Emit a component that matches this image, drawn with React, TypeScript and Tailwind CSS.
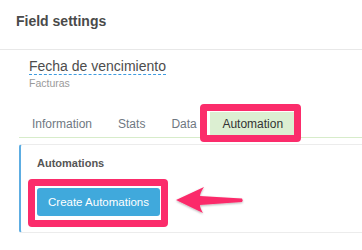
export default function App() {
  const tabs = ["Information", "Stats", "Data"];
  return (
    <div className="relative w-[362px] h-[250px] overflow-hidden bg-white font-['Liberation_Sans',Arial,sans-serif]">
      {/* header */}
      <div className="h-[50px] border-b border-[#e8e8e8] pl-4 pt-[13px]">
        <h1 className="text-[14px] leading-4 font-bold text-[#4a4a4a]">Field settings</h1>
      </div>

      <div className="pt-[9px]">
        <div className="pl-[29px]">
          <div className="w-fit text-[14px] leading-[15px] text-[#4d4d4d] border-b border-dashed border-[#3d9be0]">
            Fecha de vencimiento
          </div>
          <p className="mt-[2px] text-[10.5px] leading-3 text-[#9a9a9a]">Facturas</p>
        </div>

        {/* tabs */}
        <div className="ml-[19px] mt-[23px] flex border-b border-[#d7ecca]">
          {tabs.map((t) => (
            <div key={t} className="px-[13px] text-[12px] leading-[25px] text-[#6f7882]">
              {t}
            </div>
          ))}
          <div className="w-[86px] text-center text-[12px] leading-[25px] text-[#333] bg-[#dcefd2]">Automation</div>
        </div>

        {/* panel */}
        <div className="ml-[19px] mt-[6px] rounded-l-[3px] border-y border-[#ececec] border-l-2 border-l-[#5dade2] pl-4 pt-[11px] pb-4">
          <h2 className="text-[11px] leading-[14px] font-bold text-[#555]">Automations</h2>
          <button className="mt-[18px] block h-[28px] rounded-[3px] bg-[#40a9dc] px-[11px] text-[11.5px] leading-[28px] text-white">
            Create Automations
          </button>
        </div>
      </div>

      {/* annotations */}
      <div className="absolute left-[200px] top-[104px] w-[101px] h-[38px] rounded-[4px] border-[7px] border-[#fb2c6b]" />
      <div className="absolute left-[28px] top-[179px] w-[140px] h-[48px] rounded-[4px] border-[7px] border-[#fb2c6b]" />
      <svg className="absolute left-0 top-0" width="362" height="250">
        <defs>
          <filter id="sh" x="-20%" y="-40%" width="140%" height="180%">
            <feDropShadow dx="0" dy="1" stdDeviation="1.2" floodColor="#000" floodOpacity="0.3" />
          </filter>
        </defs>
        <path
          d="M176 200 L204 187 Q200 193 200 196 L242 198.5 Q243.5 200.5 242 202 L200 205 Q200 208 203 213 Z"
          fill="#fb2c6b"
          filter="url(#sh)"
        />
      </svg>
    </div>
  );
}
